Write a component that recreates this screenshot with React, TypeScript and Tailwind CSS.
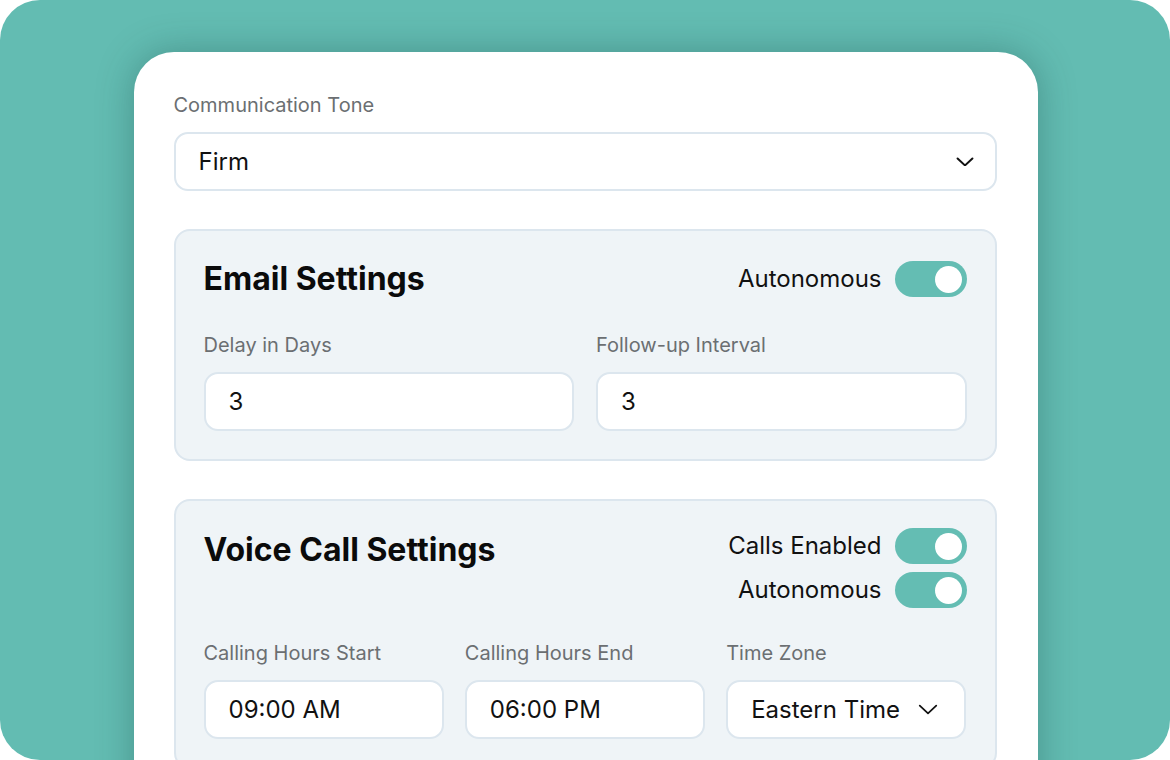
import React from "react";

function Chevron({ w = 18, sw = 2 }: { w?: number; sw?: number }) {
  return (
    <svg width={w} height={w * 0.55} viewBox="0 0 18 10" fill="none" className="shrink-0">
      <polyline points="1.5,1.5 9,8.5 16.5,1.5" stroke="#111" strokeWidth={sw} strokeLinecap="round" strokeLinejoin="round" />
    </svg>
  );
}

function Toggle() {
  return (
    <div className="w-[72px] h-[36px] rounded-full bg-[#64bdb3] flex items-center justify-end pr-[5px]">
      <div className="w-[27px] h-[27px] rounded-full bg-white" />
    </div>
  );
}

function Label({ children }: { children: React.ReactNode }) {
  return <div className="text-[20px] leading-[28px] text-[#6b6f72] mb-[13px]">{children}</div>;
}

function Field({ label, value }: { label: string; value: string }) {
  return (
    <div className="flex-1 min-w-0">
      <Label>{label}</Label>
      <div className="h-[59px] rounded-[14px] bg-white border-2 border-[#dce6ee] flex items-center px-[23px] text-[24px] text-[#111]">
        {value}
      </div>
    </div>
  );
}

export default function App() {
  return (
    <div className="w-[1170px] h-[760px] bg-white" style={{ fontFamily: "Inter, 'Noto Sans', sans-serif" }}>
      <div className="w-full h-full rounded-[40px] bg-[#63bcb2] overflow-hidden flex justify-center pt-[52px] pl-[1px]">
        <div className="w-[904px] h-[800px] bg-white rounded-t-[40px] shadow-[0_0_36px_rgba(20,70,65,0.35)] pl-[40px] pr-[41px] pt-[39px]">
          <Label>Communication Tone</Label>
          <div className="h-[59px] rounded-[14px] bg-white border-2 border-[#dce6ee] flex items-center justify-between pl-[23px] pr-[21px] text-[24px] text-[#111]">
            <span>Firm</span>
            <Chevron />
          </div>

          <div className="mt-[38px] rounded-[16px] bg-[#eff4f7] border-2 border-[#dce6ee] px-[28px] pt-[27px] pb-[28px]">
            <div className="flex items-center justify-between">
              <div className="text-[32px] leading-[42px] font-bold text-[#0b0b0b]">Email Settings</div>
              <div className="flex items-center gap-[13px]">
                <span className="text-[24px] text-[#111]">Autonomous</span>
                <Toggle />
              </div>
            </div>
            <div className="flex gap-[22px] mt-[31px]">
              <Field label="Delay in Days" value="3" />
              <Field label="Follow-up Interval" value="3" />
            </div>
          </div>

          <div className="mt-[38px] rounded-[16px] bg-[#eff4f7] border-2 border-[#dce6ee] px-[28px] pt-[27px] pb-[28px]">
            <div className="flex items-start justify-between">
              <div className="text-[32px] leading-[42px] font-bold text-[#0b0b0b] mt-[1px]">Voice Call Settings</div>
              <div className="flex flex-col items-end gap-[8px]">
                <div className="flex items-center gap-[13px]">
                  <span className="text-[24px] text-[#111]">Calls Enabled</span>
                  <Toggle />
                </div>
                <div className="flex items-center gap-[13px]">
                  <span className="text-[24px] text-[#111]">Autonomous</span>
                  <Toggle />
                </div>
              </div>
            </div>
            <div className="flex gap-[21px] mt-[31px]">
              <Field label="Calling Hours Start" value="09:00 AM" />
              <Field label="Calling Hours End" value="06:00 PM" />
              <div className="flex-1 min-w-0">
                <Label>Time Zone</Label>
                <div className="h-[59px] rounded-[14px] bg-white border-2 border-[#dce6ee] flex items-center justify-between pl-[23px] pr-[26px] text-[24px] text-[#111]">
                  <span>Eastern Time</span>
                  <Chevron w={20} sw={1.6} />
                </div>
              </div>
            </div>
          </div>
        </div>
      </div>
    </div>
  );
}
